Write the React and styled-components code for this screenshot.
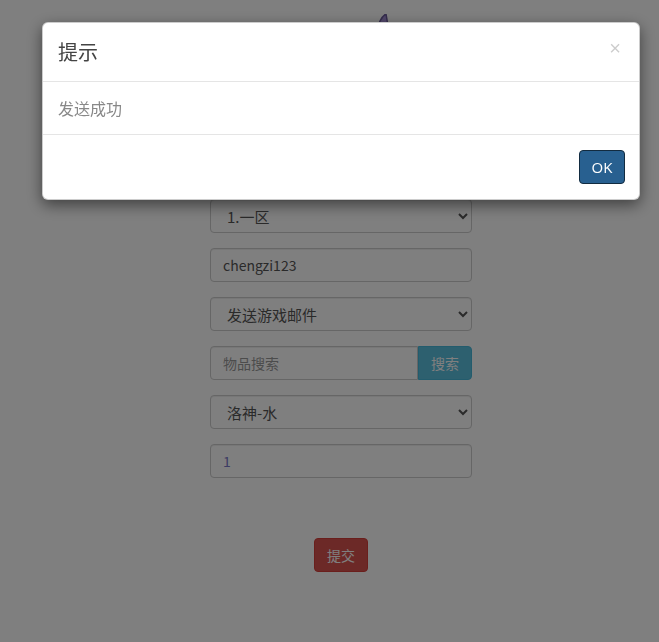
import styled, { createGlobalStyle } from 'styled-components';

const GlobalStyle = createGlobalStyle`
  html, body {
    margin: 0;
    padding: 0;
    background: #fff;
    font-family: "Noto Sans CJK SC", "Open Sans", "Liberation Sans", sans-serif;
    color: #333;
  }
  * { box-sizing: border-box; }
`

const Page = styled.div`
  width: 659px;
  height: 642px;
  padding: 14px 0 0 210px;
`

const Column = styled.div`
  width: 262px;
  display: flex;
  flex-direction: column;
  gap: 15px;
`

const Logo = styled.svg`
  display: block;
  width: 262px;
  height: 170px;
`

const controlBase = `
  width: 100%;
  height: 34px;
  border: 1px solid #ccc;
  border-radius: 4px;
  background: #fff;
  font-family: "Noto Sans CJK SC", "Open Sans", sans-serif;
  font-size: 14px;
  color: #555;
  outline: none;
  box-shadow: inset 0 1px 1px rgba(0,0,0,.075);
`

const Select = styled.select`
  ${controlBase}
  padding: 0 8px 0 12px;
  font-size: 15px;
`

const Input = styled.input`
  ${controlBase}
  padding: 0 12px;
  color: ${p => p.$tone || '#555'};
  &::placeholder { color: #999; }
`

const Group = styled.div`
  display: flex;
  width: 100%;
  ${Input} {
    border-radius: 4px 0 0 4px;
    flex: 1;
  }
`

const Btn = styled.button`
  height: 34px;
  padding: 0 12px;
  border: 1px solid ${p => p.$border};
  background: ${p => p.$bg};
  color: #fff;
  font-family: "Noto Sans CJK SC", "Open Sans", sans-serif;
  font-size: 14px;
  border-radius: ${p => p.$radius || '4px'};
  cursor: pointer;
`

const SubmitRow = styled.div`
  display: flex;
  justify-content: center;
  margin-top: 45px;
`

const Backdrop = styled.div`
  position: fixed;
  inset: 0;
  background: rgba(0,0,0,.5);
`

const Dialog = styled.div`
  position: fixed;
  top: 22px;
  left: 42px;
  width: 598px;
  background: #fff;
  border: 1px solid rgba(0,0,0,.2);
  border-radius: 6px;
  box-shadow: 0 5px 15px rgba(0,0,0,.5);
`

const Header = styled.div`
  display: flex;
  justify-content: space-between;
  align-items: flex-start;
  padding: 15px;
  border-bottom: 1px solid #e5e5e5;
`

const Title = styled.h4`
  margin: 0;
  font-size: 20px;
  line-height: 28px;
  font-weight: 400;
  color: #444;
`

const Close = styled.span`
  font-family: "Liberation Sans", sans-serif;
  font-size: 20px;
  line-height: 18px;
  font-weight: 400;
  color: #000;
  opacity: .2;
  margin-top: 1px;
  margin-right: 3px;
`

const Body = styled.div`
  padding: 15px;
  font-size: 16px;
  line-height: 22px;
  color: #888;
  border-bottom: 1px solid #e5e5e5;
`

const Footer = styled.div`
  display: flex;
  justify-content: flex-end;
  padding: 15px 14px 15px 15px;
`

const OkBtn = styled.button`
  width: 46px;
  height: 34px;
  background: #286090;
  border: 1px solid #122b40;
  border-radius: 4px;
  color: #fff;
  font-family: "Open Sans", "Liberation Sans", sans-serif;
  font-size: 15px;
`

export default function App() {
  return (
    <>
      <GlobalStyle />
      <Page>
        <Column>
          <Logo viewBox="0 0 262 170">
            <path d="M166 20 C168 10 172 2 176 0 L178 12 C176 30 170 60 160 90 L150 90 C156 60 162 40 166 20 Z" fill="#a48fd6" stroke="#6a5a9a" strokeWidth="1.5" />
          </Logo>
          <Select defaultValue="1">
            <option value="1">1.一区</option>
          </Select>
          <Input defaultValue="chengzi123" />
          <Select defaultValue="mail">
            <option value="mail">发送游戏邮件</option>
          </Select>
          <Group>
            <Input placeholder="物品搜索" />
            <Btn $bg="#5bc0de" $border="#46b8da" $radius="0 4px 4px 0">搜索</Btn>
          </Group>
          <Select defaultValue="a">
            <option value="a">洛神-水</option>
          </Select>
          <Input defaultValue="1" $tone="#7878c8" />
          <SubmitRow>
            <Btn $bg="#d9534f" $border="#d43f3a">提交</Btn>
          </SubmitRow>
        </Column>
      </Page>
      <Backdrop />
      <Dialog>
        <Header>
          <Title>提示</Title>
          <Close>×</Close>
        </Header>
        <Body>发送成功</Body>
        <Footer>
          <OkBtn>OK</OkBtn>
        </Footer>
      </Dialog>
    </>
  )
}
